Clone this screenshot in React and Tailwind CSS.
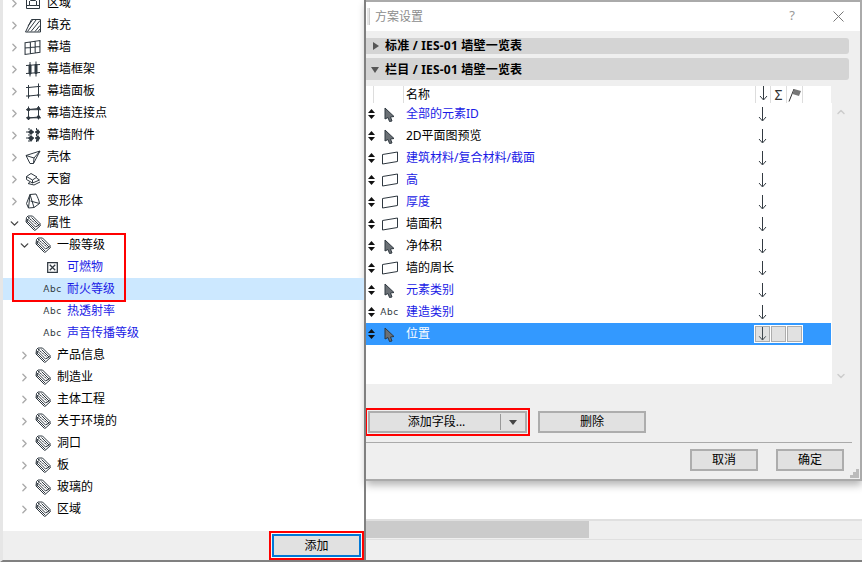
import { ChevronRight, ChevronDown, ChevronUp } from 'lucide-react'

const Svg = ({ children, className = 'w-4 h-4' }) => (
  <svg viewBox="0 0 16 16" className={className} fill="none" stroke="#2f3840" strokeWidth="1">
    {children}
  </svg>
)

const ZoneIcon = () => (
  <Svg><path d="M1.500 2.500h3l1 3h5l1-3h3v11h-13zM4.500 6v4.500h7V6M1.500 10.500h3M11.500 10.500h3" /></Svg>
)
const FillIcon = () => (
  <Svg>
    <path d="M.5 15 6.500 2.500h9v12.500z" />
    <path d="M2.500 14.500 11 3M6 14.500 15 3.500M10 14.500l5-6M13 14.500l2-2.500M3 9 7.500 3" strokeWidth="1" />
  </Svg>
)
const GridIcon = () => (
  <Svg className="w-[17px] h-[17px]"><path d="M1 3.500 15 1.500v11L1 14.500zM1 8.500l14-1.500M6 3v11M10.500 2.300v11" /></Svg>
)
const FrameIcon = () => (
  <Svg>
    <path d="M1 4.500 15 3.500M1 12.500l14-1M5 1v14.500M11 .5v15" strokeWidth="1" />
    <path d="M4 4h2v9H4zM10 3.500h2v9h-2z" fill="#2f3840" />
  </Svg>
)
const PanelIcon = () => (
  <Svg><path d="M3.500 4.500 13.500 3.500v8.500l-10 1zM1 4.500h4M12 3.500h3.500M1 13h4M12 12h3.500M3.500 2v13.500M13.500 .5v14" /></Svg>
)
const JointIcon = () => (
  <Svg>
    <path d="M3.500 4.500 13.500 3.500v8.500l-10 1zM1 4.700h15M1 12.800h15M3.500 1.500v13.500M13.500 1v13.500" />
    <g fill="#2f3840" stroke="none">
      <circle cx="3.500" cy="4.500" r="1.700" /><circle cx="13.500" cy="3.500" r="1.700" />
      <circle cx="3.500" cy="13" r="1.700" /><circle cx="13.500" cy="12" r="1.700" />
    </g>
  </Svg>
)
const AccessoryIcon = () => (
  <Svg>
    <path d="M1 5h15M1 11h15M4 1v15M11.500 1v15" strokeDasharray="2 1" />
    <path d="M6 2 9 5 6 8 3 5zM13 2l2 3-2 3-3-3zM6 8l3 3-3 4-3-4zM13 8l2 3-2 4-3-4z" fill="#2f3840" stroke="none" />
  </Svg>
)
const ShellIcon = () => (
  <Svg><path d="M1 6.500 15 2 8.500 14.500 5 14.500zM1 6.500 9 9l6-7M9 9l-.5 5.500" /></Svg>
)
const SkylightIcon = () => (
  <Svg><path d="M1.500 5.500 6 2.500l6 3.500-4.500 3zM1.500 8.500l6 3.500 7-3-3-2M1.500 5.500v3M7.500 9v3M5 11.500 3 12.500l6 1.500 6-3" /></Svg>
)
const MorphIcon = () => (
  <Svg><path d="M5 1.500 11 1c1.500 3 3 6 3.500 9.500L9 14.500 3.500 15l-2-4.500zM5 1.500 3.500 15M5.500 8l9 2.500M5 1.500 9 14.500" /></Svg>
)
const TagsIcon = () => (
  <svg viewBox="0 0 16 16" className="w-4 h-4" fill="none" stroke="#2f3840" strokeWidth="1">
    <path d="M1.500 2.500 3 1h4.500l8 8c.5.500.5 1 0 1.500L10.500 15c-.5.500-1 .5-1.500 0l-8-8z" fill="#fff" />
    <path d="M2 7.500 2.500 4l8 8 4.500-2.500M1.500 5.500l9 9M4.500 3.500l8 7M6.500 2.500l7.500 7.500" />
    <path d="M3 3.500h1.500V2H3z" fill="#2f3840" stroke="none" />
    <path d="M6 6.500l1.500-1M8 8.500l1.500-1M10 10.500l1.500-1" stroke="#fff" />
  </svg>
)
const CheckboxIcon = () => (
  <Svg className="w-[11px] h-[11px]">
    <path d="M1 1h14v14H1z" strokeWidth="1.800" /><path d="M4 4l8 8M12 4l-8 8" strokeWidth="1.800" />
  </Svg>
)
const Abc = () => (
  <span className="text-[9px] leading-none tracking-[0.5px] text-[#2f3840] font-['DejaVu_Sans',sans-serif]">Abc</span>
)
const CursorIcon = ({ className = 'w-[11px] h-[15px]' }) => (
  <svg viewBox="0 0 11 15" className={className}>
    <path d="M1 1 10 9.500 6.500 10 8 14 5.500 14.500 4 10.500 1 12z" fill="#6b7075" stroke="#2f3840" strokeWidth="1" />
  </svg>
)
const RectIcon = () => (
  <svg viewBox="0 0 16 14" className="w-4 h-[14px]" fill="#fff" stroke="#2f3840" strokeWidth="1">
    <path d="M.5 3.500 15.500 1v9.500L.5 13z" />
  </svg>
)
const DownArrow = ({ className = 'w-[9px] h-[15px]' }) => (
  <svg viewBox="0 0 9 15" className={className} fill="none" stroke="#333b42" strokeWidth="1">
    <path d="M4.500 0v13.500M1 10l3.500 4L8 10" />
  </svg>
)
const SortArrows = () => (
  <svg viewBox="0 0 7 10" className="w-[7px] h-[10px]" fill="#111">
    <path d="M3.500 0 7 4H0zM3.500 10 7 6H0z" />
  </svg>
)
const FlagIcon = () => (
  <svg viewBox="0 0 14 14" className="w-[14px] h-[14px]">
    <path d="M1 13.500 6 1" stroke="#333" fill="none" />
    <path d="M6 1 13 3 11 8 4.500 6z" fill="#777" />
  </svg>
)

const treeRows = [
  { label: '区域', icon: <ZoneIcon /> },
  { label: '填充', icon: <FillIcon /> },
  { label: '幕墙', icon: <GridIcon /> },
  { label: '幕墙框架', icon: <FrameIcon /> },
  { label: '幕墙面板', icon: <PanelIcon /> },
  { label: '幕墙连接点', icon: <JointIcon /> },
  { label: '幕墙附件', icon: <AccessoryIcon /> },
  { label: '壳体', icon: <ShellIcon /> },
  { label: '天窗', icon: <SkylightIcon /> },
  { label: '变形体', icon: <MorphIcon /> },
  { label: '属性', icon: <TagsIcon />, open: true },
  { label: '一般等级', icon: <TagsIcon />, open: true, level: 2 },
  { label: '可燃物', icon: <CheckboxIcon />, leaf: true },
  { label: '耐火等级', icon: <Abc />, leaf: true, selected: true },
  { label: '热透射率', icon: <Abc />, leaf: true },
  { label: '声音传播等级', icon: <Abc />, leaf: true },
  { label: '产品信息', icon: <TagsIcon />, level: 2 },
  { label: '制造业', icon: <TagsIcon />, level: 2 },
  { label: '主体工程', icon: <TagsIcon />, level: 2 },
  { label: '关于环境的', icon: <TagsIcon />, level: 2 },
  { label: '洞口', icon: <TagsIcon />, level: 2 },
  { label: '板', icon: <TagsIcon />, level: 2 },
  { label: '玻璃的', icon: <TagsIcon />, level: 2 },
  { label: '区域', icon: <TagsIcon />, level: 2 },
]

const fieldRows = [
  { label: '全部的元素ID', icon: <CursorIcon />, blue: true },
  { label: '2D平面图预览', icon: <CursorIcon /> },
  { label: '建筑材料/复合材料/截面', icon: <RectIcon />, blue: true },
  { label: '高', icon: <RectIcon />, blue: true },
  { label: '厚度', icon: <RectIcon />, blue: true },
  { label: '墙面积', icon: <RectIcon /> },
  { label: '净体积', icon: <CursorIcon /> },
  { label: '墙的周长', icon: <RectIcon /> },
  { label: '元素类别', icon: <CursorIcon />, blue: true },
  { label: '建造类别', icon: <Abc />, blue: true },
  { label: '位置', icon: <CursorIcon />, selected: true },
]

const TreeRow = ({ row }) => {
  const Chevron = row.open ? ChevronDown : ChevronRight
  const chevronColor = row.open ? 'text-[#444]' : 'text-[#aaa]'
  return (
    <div className={`h-[22px] flex items-center shrink-0 ${row.selected ? 'bg-[#cce8ff]' : ''}`}>
      {row.leaf ? (
        <>
          <div className="ml-[41px] w-[17px] flex justify-center shrink-0">{row.icon}</div>
          <span className="ml-[6px] text-[#1a1ae6]">{row.label}</span>
        </>
      ) : (
        <>
          <div className={`flex items-center shrink-0 ${row.level === 2 ? 'pl-[15px]' : 'pl-[5px]'}`}>
            <Chevron className={`w-[13px] h-[13px] ${chevronColor}`} strokeWidth={2.5} />
          </div>
          <div className="ml-[3px] shrink-0 w-[17px] flex justify-center">{row.icon}</div>
          <span className="ml-[6px] text-black">{row.label}</span>
        </>
      )}
    </div>
  )
}

const FieldRow = ({ row }) => (
  <div className={`h-[22px] flex items-center ${row.selected ? 'bg-[#3399ff] mr-[1px]' : ''}`}>
    <div className="w-[15px] pl-[2px] flex shrink-0"><SortArrows /></div>
    <div className="w-[17px] flex justify-center shrink-0">{row.icon}</div>
    <span className={`ml-[8px] flex-1 ${row.selected ? 'text-white' : row.blue ? 'text-[#1a1ae6]' : 'text-black'}`}>
      {row.label}
    </span>
    {row.selected ? (
      <div className="flex gap-[1px] mr-[28px] p-[1px] bg-white">
        <div className="w-[15px] h-[16px] bg-[#e1e1e1] border border-[#adadad] flex justify-center"><DownArrow className="w-[9px] h-[14px]" /></div>
        <div className="w-[15px] h-[16px] bg-[#e1e1e1] border border-[#adadad]" />
        <div className="w-[15px] h-[16px] bg-[#e1e1e1] border border-[#adadad]" />
      </div>
    ) : (
      <div className="w-[9px] mr-[65px] flex"><DownArrow /></div>
    )}
  </div>
)

const Btn = ({ children, className = '' }) => (
  <div className={`h-[22px] flex items-center justify-center bg-[#e1e1e1] border-2 border-[#adadad] text-black ${className}`}>
    {children}
  </div>
)

export default function App() {
  return (
    <div className="w-[862px] h-[562px] flex overflow-hidden bg-white text-[12px] leading-none font-['Noto_Sans','Noto_Sans_CJK_SC',sans-serif]">
      {/* left tree panel */}
      <div className="relative z-20 w-[366px] h-full flex flex-col shrink-0 border-l-[3px] border-l-[#e6e6e6] border-r-2 border-r-[#808080] border-b-2 border-b-[#808080]">
        <div className="flex-1 overflow-hidden">
          <div className="-mt-[8px] flex flex-col">
            {treeRows.map((row, i) => <TreeRow key={i} row={row} />)}
          </div>
        </div>
        <div className="h-[29px] bg-[#efefef] flex justify-end items-start shrink-0">
          <div className="w-[95px] h-[29px] border-2 border-[#ff0000] p-[1px] bg-[#f8f8f8]">
            <div className="h-full bg-[#e1e1e1] border-2 border-[#0078d7] flex items-center justify-center text-black">添加</div>
          </div>
        </div>
        {/* red highlight around the selection */}
        <div className="absolute left-[9px] top-[233px] w-[114px] h-[69px] border-2 border-[#ff0000] pointer-events-none" />
      </div>

      {/* right side: dialog on top, window behind it */}
      <div className="flex-1 h-full flex flex-col min-w-0">
        <div className="h-[481px] flex flex-col shrink-0 bg-[#efefef] border-t-2 border-t-[#aaa] border-r-2 border-r-[#aaa] border-b-2 border-b-[#aaa] shadow-[0_4px_8px_rgba(0,0,0,0.3)] relative z-10">
          <div className="h-[29px] bg-white flex items-center shrink-0">
            <div className="w-[3px] h-[17px] bg-[#e6e6e6] border-r border-[#ccc] ml-[1px]" />
            <span className="ml-[5px] text-[#8c8c8c]">方案设置</span>
            <span className="ml-auto text-[#999] text-[13px] mr-[38px] -mt-[2px]">?</span>
            <svg viewBox="0 0 11 11" className="w-[11px] h-[11px] mr-[16px]" stroke="#777" fill="none"><path d="M.5.500 10.500 10.500M10.500.500.500 10.500" /></svg>
          </div>
          <div className="pt-[7px] mr-[11px] flex flex-col gap-[4px] shrink-0">
            <div className="h-[16px] bg-[#d4d4d4] rounded-r-[3px] flex items-center font-bold tracking-[0.2px]">
              <svg viewBox="0 0 6 8" className="w-[6px] h-[8px] ml-[7px] mr-[6px]" fill="#555"><path d="M0 0 6 4 0 8z" /></svg>
              标准 / IES-01 墙壁一览表
            </div>
            <div className="h-[22px] bg-[#d4d4d4] rounded-r-[3px] flex items-center font-bold tracking-[0.2px] pt-[1px]">
              <svg viewBox="0 0 8 6" className="w-[8px] h-[6px] ml-[5px] mr-[6px]" fill="#555"><path d="M0 0h8L4 6z" /></svg>
              栏目 / IES-01 墙壁一览表
            </div>
          </div>
          <div className="mt-[6px] flex shrink-0">
            <div className="w-[465px] flex flex-col">
              <div className="h-[17px] bg-white flex items-center">
                <div className="w-[8px] h-full border-r border-[#ddd]" />
                <div className="w-[30px] h-full border-r border-[#ddd]" />
                <span className="ml-[2px] flex-1">名称</span>
                <div className="w-[16px] h-full border-x border-[#ddd] flex justify-center"><DownArrow /></div>
                <div className="w-[16px] h-full border-r border-[#ddd] flex items-center justify-center text-[14px] text-[#333]">Σ</div>
                <div className="w-[16px] h-full border-r border-[#ddd] flex items-center justify-center"><FlagIcon /></div>
                <div className="w-[28px]" />
              </div>
            </div>
          </div>
          <div className="flex shrink-0 h-[281px]">
            <div className="w-[466px] bg-white flex flex-col">
              {fieldRows.map((row, i) => <FieldRow key={i} row={row} />)}
            </div>
            <div className="w-[18px] flex flex-col items-center justify-between pt-[3px] pb-[2px]">
              <ChevronUp className="w-[12px] h-[12px] text-[#ccc]" strokeWidth={3} />
              <ChevronDown className="w-[12px] h-[12px] text-[#ccc]" strokeWidth={3} />
            </div>
          </div>
          <div className="mt-[24px] flex items-center shrink-0">
            <div className="w-[165px] h-[28px] -ml-[1px] border-2 border-[#ff0000] p-[1px] flex relative z-30">
              <div className="flex-1 flex items-center bg-[#e1e1e1] border-2 border-[#adadad]">
                <span className="flex-1 text-center pl-[3px]">添加字段...</span>
                <div className="w-[1px] h-[16px] bg-[#999]" />
                <svg viewBox="0 0 8 5" className="w-[8px] h-[5px] mx-[8px]" fill="#444"><path d="M0 0h8L4 5z" /></svg>
              </div>
            </div>
            <Btn className="w-[108px] ml-[8px]">删除</Btn>
          </div>
          <div className="mt-[6px] mr-[8px] h-[1px] bg-[#aaa] shrink-0" />
          <div className="mt-[6px] flex justify-end gap-[18px] mr-[16px] shrink-0">
            <Btn className="w-[68px]">取消</Btn>
            <Btn className="w-[68px]">确定</Btn>
          </div>
          {/* resize grip */}
          <svg viewBox="0 0 9 9" className="absolute right-[1px] bottom-[1px] w-[9px] h-[9px]" fill="#bbb">
            <path d="M6 0h3v3H6zM3 3h3v3H3zM6 3h3v3H6zM0 6h3v3H0zM3 6h3v3H3zM6 6h3v3H6z" />
          </svg>
        </div>
        <div className="flex-1 bg-white" />
        <div className="h-[21px] shrink-0 bg-[#efefef] border-t-2 border-b border-[#e0e0e0] pb-[1px] flex items-stretch">
          <div className="w-[223px] bg-[#cbcbcb]" />
        </div>
        <div className="h-[22px] shrink-0 bg-[#efefef] border-b-2 border-b-[#808080]" />
      </div>
    </div>
  )
}
